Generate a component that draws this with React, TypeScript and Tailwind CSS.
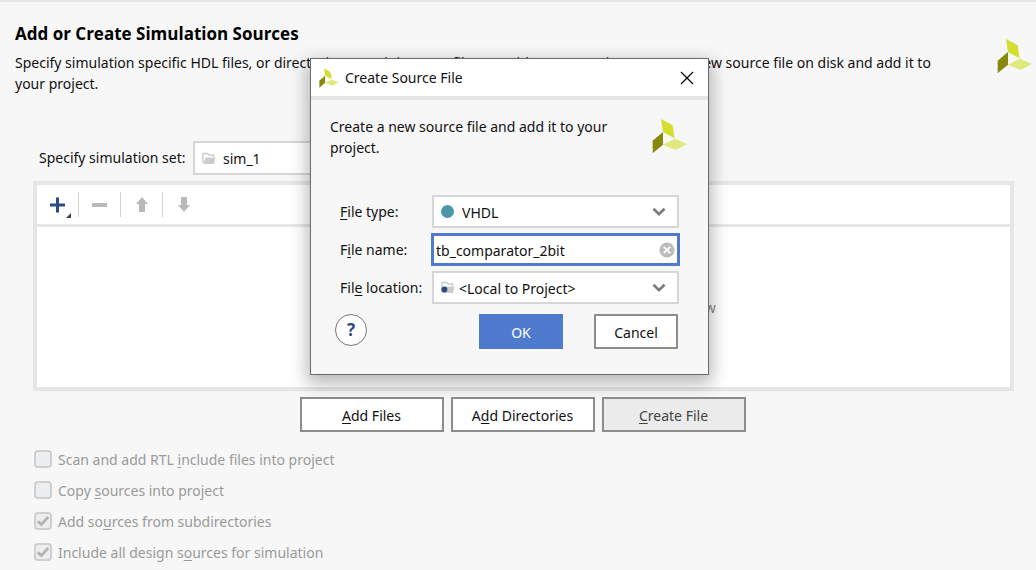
import { useState } from "react";
import type { ReactNode } from "react";

function Logo({ className }: { className: string }) {
  return (
    <svg viewBox="0 0 108 108" className={className} aria-hidden="true">
      <path d="M27 3 62 22 68 61 33 42Z" fill="#d3de2e" />
      <path d="M2 68 33 42V80L2 106Z" fill="#868a0c" />
      <path d="M33 80 69 62 105 78 71 96Z" fill="#e0e97c" />
    </svg>
  );
}

function FolderIcon({ dot = false }: { dot?: boolean }) {
  return (
    <svg viewBox="0 0 14 13" className="h-[13px] w-3.5 shrink-0" aria-hidden="true">
      <path d="M1 11V1.5H5.5L7 3H11.5V5" fill="none" stroke="#cbcbcb" strokeWidth="1.4" />
      <path d="M3.5 5.5H13.5L12 12H1.5Z" fill="#cbcbcb" />
      {dot && <circle cx="3.4" cy="8.6" r="3" fill="#2d4a80" />}
    </svg>
  );
}

function Chevron() {
  return (
    <svg viewBox="0 0 14 10" className="pointer-events-none h-2.5 w-3.5 shrink-0" aria-hidden="true">
      <path d="M1.5 1.8 7 7.2 12.5 1.8" fill="none" stroke="#7c7c7c" strokeWidth="2.7" />
    </svg>
  );
}

function Key({ children }: { children: ReactNode }) {
  return <span className="underline underline-offset-2">{children}</span>;
}

function SelectBox({ id, icon, value, className }: { id: string; icon: ReactNode; value: string; className: string }) {
  return (
    <div className={`flex items-center border-2 border-[#d6d6d6] bg-white ${className}`}>
      {icon}
      <select id={id} className="min-w-0 flex-1 appearance-none bg-transparent pt-0.5 outline-none">
        <option>{value}</option>
      </select>
      <Chevron />
    </div>
  );
}

function CheckRow({ id, checked, children }: { id: string; checked: boolean; children: ReactNode }) {
  return (
    <div className="flex h-[31px] items-center gap-1.5 text-[#9a9a9a]">
      <span className="grid">
        <input
          id={id}
          type="checkbox"
          disabled
          defaultChecked={checked}
          className="col-start-1 row-start-1 size-[18px] appearance-none rounded border-2 border-[#cfcfcf] bg-[#ebedef]"
        />
        {checked && (
          <svg viewBox="0 0 18 18" className="pointer-events-none col-start-1 row-start-1 size-[18px]" aria-hidden="true">
            <path d="M3.8 9.2 7.3 12.6 14.2 5" fill="none" stroke="#b4b4b4" strokeWidth="2.8" />
          </svg>
        )}
      </span>
      <label htmlFor={id} className="pt-0.5">{children}</label>
    </div>
  );
}

const toolButton = "flex h-[25px] w-[42px] items-center justify-center border-r border-[#d4d4d4] last:border-r-0";
const wideButton = "h-[35px] w-36 border-2 border-[#8d8d8d] pt-0.5";

function CreateDialog() {
  const [name, setName] = useState("tb_comparator_2bit");
  return (
    <div
      role="dialog"
      aria-labelledby="dialog-title"
      className="absolute top-14 left-[310px] w-[399px] border border-[#6a6a6a] bg-[#f7f7f7] pb-[25px] shadow-[0_6px_16px_3px_rgba(0,0,0,0.28)]"
    >
      <header className="flex h-[41px] items-center border-b-4 border-[#e6e6e6] bg-white pr-[13px] pl-2">
        <Logo className="size-5" />
        <h2 id="dialog-title" className="ml-1.5 flex-1">Create Source File</h2>
        <button type="button" aria-label="Close" className="flex size-4 items-center justify-center">
          <svg viewBox="0 0 14 14" className="size-3.5" aria-hidden="true">
            <path d="M1 1 13 13M13 1 1 13" stroke="#000" strokeWidth="1.2" />
          </svg>
        </button>
      </header>
      <div className="flex justify-between pt-4 pr-5 pl-[19px]">
        <p className="w-[300px] leading-[21px]">Create a new source file and add it to your project.</p>
        <Logo className="mt-0.5 size-9" />
      </div>
      <div className="mt-[37px] grid grid-cols-[90px_1fr] items-center gap-y-[5px] pr-[29px] pl-[29px]">
        <label htmlFor="file-type"><Key>F</Key>ile type:</label>
        <SelectBox
          id="file-type"
          value="VHDL"
          className="ml-0.5 h-[33px] gap-2 pr-[11px] pl-[7px]"
          icon={<span className="size-[13px] shrink-0 rounded-full bg-[#4a97ab]" />}
        />
        <label htmlFor="file-name">F<Key>i</Key>le name:</label>
        <div className="ml-px -mr-px flex h-[33px] items-center border-3 border-[#4f7bcf] bg-white pr-0.5 pl-0.5">
          <input
            id="file-name"
            value={name}
            onChange={(e) => setName(e.target.value)}
            className="min-w-0 flex-1 bg-transparent pt-0.5 outline-none"
          />
          <button type="button" aria-label="Clear" onClick={() => setName("")}>
            <svg viewBox="0 0 16 16" className="block size-4" aria-hidden="true">
              <circle cx="8" cy="8" r="7.6" fill="#bcbcbc" />
              <path d="M4.8 4.8 11.2 11.2M11.2 4.8 4.8 11.2" stroke="#fff" strokeWidth="1.8" />
            </svg>
          </button>
        </div>
        <label htmlFor="file-location">Fil<Key>e</Key> location:</label>
        <SelectBox
          id="file-location"
          value="<Local to Project>"
          className="ml-0.5 h-[33px] gap-1 pr-[11px] pl-[7px]"
          icon={<FolderIcon dot />}
        />
      </div>
      <div className="mt-2.5 flex items-start pr-[30px] pl-6">
        <button
          type="button"
          aria-label="Help"
          className="flex size-8 items-center justify-center rounded-full border border-[#777] bg-white text-[17px] font-bold text-[#2d4a80]"
        >
          ?
        </button>
        <button type="button" className="ml-auto h-[35px] w-21 bg-[#4f7bcf] pt-0.5 text-white">OK</button>
        <button type="button" className="ml-[31px] h-[35px] w-21 border-2 border-[#8d8d8d] bg-white pt-0.5">Cancel</button>
      </div>
    </div>
  );
}

export default function App() {
  return (
    <div className="relative min-h-screen overflow-hidden border-t-2 border-[#e6e6e6] bg-[#f7f7f7] font-['Noto_Sans','Open_Sans',sans-serif] text-sm text-[#111]">
      <header className="flex items-start justify-between pt-5 pr-[3px] pl-[15px]">
        <div className="max-w-[935px]">
          <h1 className="font-['Open_Sans','Noto_Sans',sans-serif] text-[17px] leading-6 font-bold text-black">Add or Create Simulation Sources</h1>
          <p className="mt-1.5 leading-[21px]">
            Specify simulation specific HDL files, or directories containing HDL files, to add to your project. Create a new source file on disk and add it to your project.
          </p>
        </div>
        <Logo className="mt-4 size-9 shrink-0" />
      </header>

      <main className="pt-[47px] pr-[22px] pl-[33px]">
        <div className="flex items-center pl-1.5">
          <label htmlFor="sim-set" className="w-[154px] whitespace-nowrap">Specify simulation set:</label>
          <SelectBox id="sim-set" value="sim_1" className="h-[34px] w-[200px] gap-[7px] pr-3 pl-[7px]" icon={<FolderIcon />} />
        </div>

        <section className="mt-1.5 border-4 border-[#e6e6e6] bg-white">
          <div className="flex h-[42px] items-center border-b-3 border-[#e6e6e6]">
            <button type="button" aria-label="Add" className={toolButton}>
              <svg viewBox="0 0 24 22" className="mt-1 ml-1.5 h-[22px] w-6 shrink-0" aria-hidden="true">
                <path d="M1 9H16M8.5 1.5V16.5" stroke="#2d4a80" strokeWidth="3" />
                <path d="M22 17V22H17Z" fill="#444" />
              </svg>
            </button>
            <button type="button" aria-label="Remove" className={toolButton}>
              <span className="h-1 w-[15px] bg-[#b9b9b9]" />
            </button>
            <button type="button" aria-label="Move up" className={toolButton}>
              <svg viewBox="0 0 12 15" className="h-[15px] w-3" aria-hidden="true">
                <path d="M6 0 12 7H9V15H3V7H0Z" fill="#b9b9b9" />
              </svg>
            </button>
            <button type="button" aria-label="Move down" className={toolButton}>
              <svg viewBox="0 0 12 15" className="h-[15px] w-3" aria-hidden="true">
                <path d="M6 15 12 8H9V0H3V8H0Z" fill="#b9b9b9" />
              </svg>
            </button>
          </div>
          <div className="flex h-40 items-center justify-center pt-0.5 text-[#888]">
            Use Add Files, Add Directories or Create File buttons below
          </div>
        </section>

        <div className="mt-1.5 flex justify-center gap-[7px] pr-0.5">
          <button type="button" className={`${wideButton} bg-white`}><Key>A</Key>dd Files</button>
          <button type="button" className={`${wideButton} bg-white`}>A<Key>d</Key>d Directories</button>
          <button type="button" className={`${wideButton} bg-[#ebebeb] text-[#444]`}><Key>C</Key>reate File</button>
        </div>

        <div className="mt-[11px] pl-px">
          <CheckRow id="scan" checked={false}>Scan and add RTL <Key>i</Key>nclude files into project</CheckRow>
          <CheckRow id="copy" checked={false}>Copy <Key>s</Key>ources into project</CheckRow>
          <CheckRow id="subdirs" checked>Add so<Key>u</Key>rces from subdirectories</CheckRow>
          <CheckRow id="include" checked>Include all design s<Key>o</Key>urces for simulation</CheckRow>
        </div>
      </main>

      <CreateDialog />
    </div>
  );
}
